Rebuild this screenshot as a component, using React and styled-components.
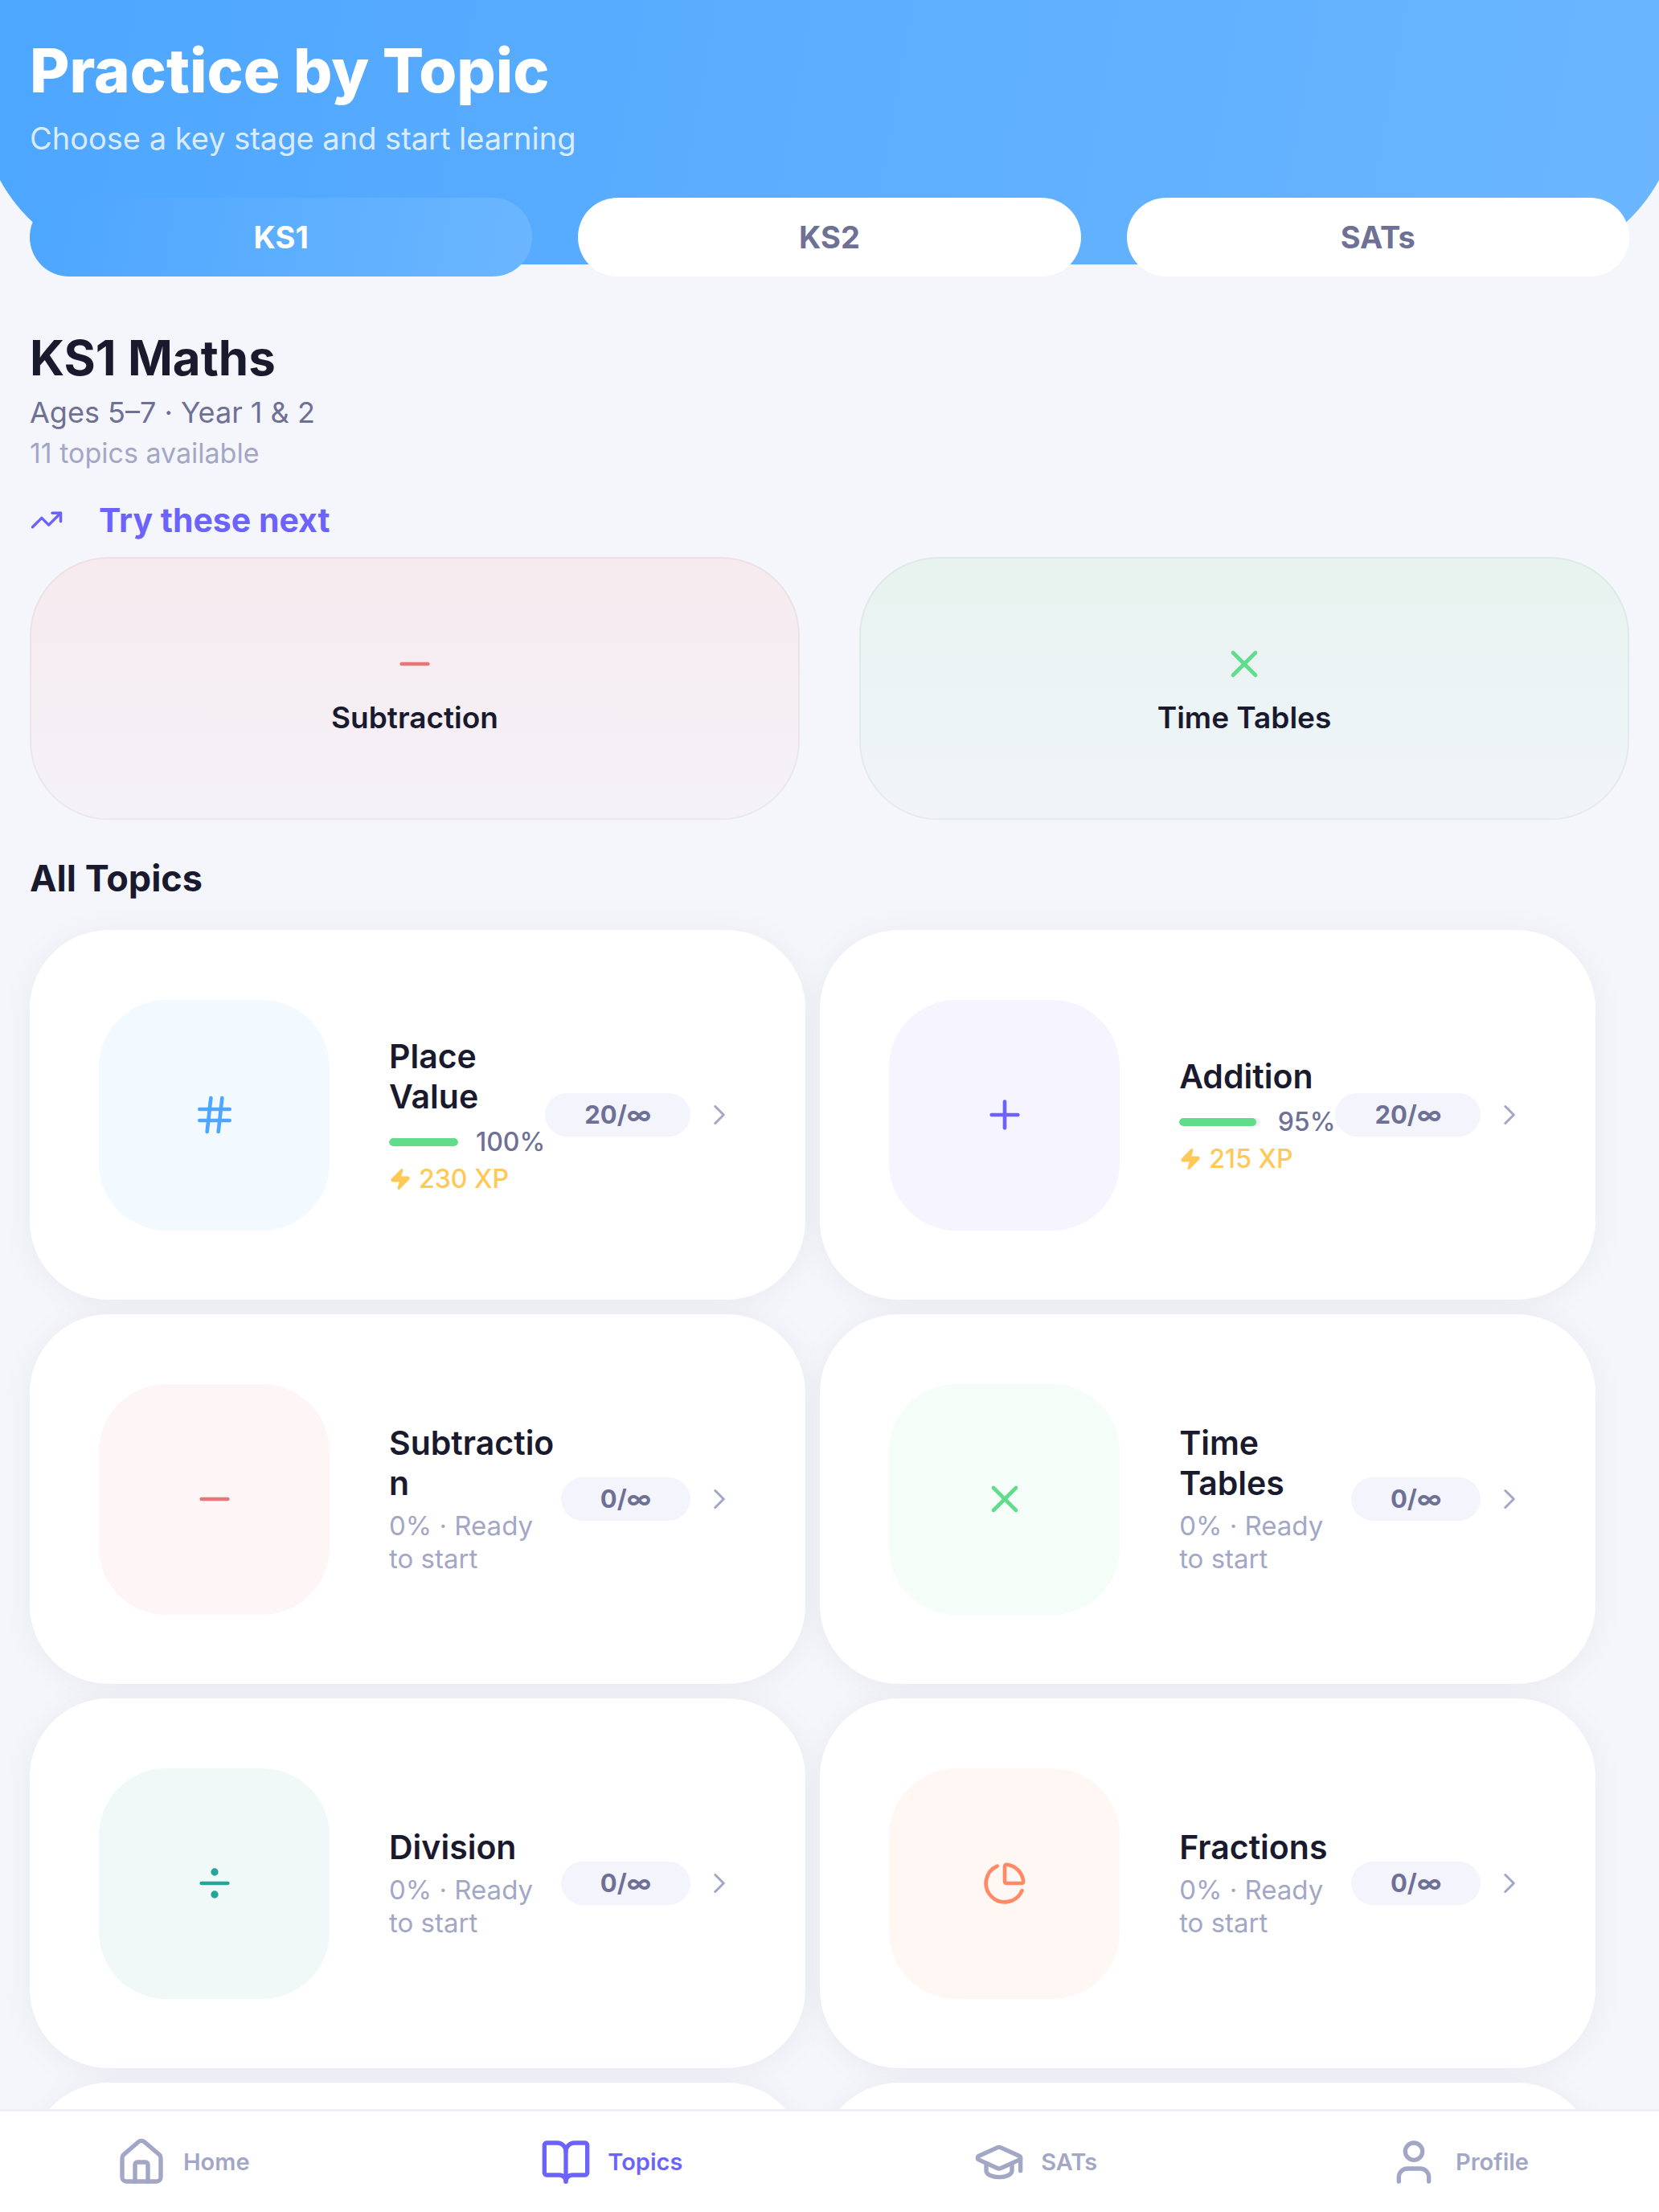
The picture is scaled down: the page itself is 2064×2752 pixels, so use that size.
import React, { useState } from "react";
import styled, { createGlobalStyle } from "styled-components";
import {
  BookOpen,
  ChartPie,
  ChevronRight,
  Divide,
  GraduationCap,
  Hash,
  House,
  Minus,
  Plus,
  TrendingUp,
  User,
  X,
  Zap,
} from "lucide-react";

const GlobalStyle = createGlobalStyle`
  * {
    box-sizing: border-box;
  }
  body {
    margin: 0;
    background-color: #f5f6fc;
    color: #1a1a2e;
    font-family: Inter, "Liberation Sans", sans-serif;
  }
  h1, h2, h3, p {
    margin: 0;
  }
`;

const Screen = styled.div`
  display: flex;
  flex-direction: column;
  height: 100vh;
  overflow: hidden;
`;

const Content = styled.main`
  flex: 1;
  min-height: 0;
  overflow-x: hidden;
  overflow-y: auto;
  scrollbar-width: none;
`;

const Header = styled.header`
  margin: 0 -24px;
  padding: 41px 61px 133px;
  border-radius: 0 0 200px 200px;
  background: linear-gradient(100deg, #4da6ff, #6bb6ff);
  color: white;
`;

const Title = styled.h1`
  font-size: 76px;
  line-height: 92px;
  font-weight: 800;
`;

const Subtitle = styled.p`
  margin-top: 15px;
  font-size: 38px;
  line-height: 48px;
  color: rgba(255, 255, 255, 0.8);
`;

const StageTabs = styled.div`
  display: grid;
  grid-template-columns: repeat(3, 1fr);
  gap: 57px;
  margin-top: -83px;
  padding: 0 37px;
`;

const StageTab = styled.button`
  height: 98px;
  border: none;
  border-radius: 49px;
  background: ${(props) =>
    props.$active ? "linear-gradient(100deg, #4da6ff, #6bb6ff)" : "white"};
  color: ${(props) => (props.$active ? "white" : "#6e7096")};
  font-family: inherit;
  font-size: 38px;
  font-weight: 700;
`;

const Section = styled.section`
  padding: 64px 37px 0;
`;

const StageName = styled.h2`
  font-size: 60px;
  line-height: 74px;
  font-weight: 700;
`;

const StageAges = styled.p`
  margin-top: 9px;
  font-size: 36px;
  line-height: 44px;
  color: #6e7096;
`;

const StageCount = styled.p`
  margin-top: 8px;
  font-size: 34px;
  line-height: 42px;
  color: #a3a7c6;
`;

const NextHeading = styled.h3`
  display: flex;
  align-items: center;
  gap: 44px;
  margin-top: 37px;
  font-size: 41px;
  line-height: 50px;
  font-weight: 700;
  color: #6c63ff;
`;

const NextList = styled.div`
  display: grid;
  grid-template-columns: repeat(2, 1fr);
  gap: 74px;
  margin-top: 21px;
`;

const NextCard = styled.button`
  display: flex;
  flex-direction: column;
  align-items: center;
  justify-content: center;
  gap: 16px;
  height: 327px;
  border: 2px solid rgba(0, 0, 0, 0.04);
  border-radius: 98px;
  background: linear-gradient(${(props) => props.$from}, ${(props) => props.$to}) border-box;
  color: ${(props) => props.$color};
`;

const NextName = styled.span`
  font-family: Inter, "Liberation Sans", sans-serif;
  font-size: 37px;
  line-height: 46px;
  font-weight: 600;
  color: #1a1a2e;
`;

const AllHeading = styled.h3`
  margin: 45px 0 36px;
  font-size: 45px;
  line-height: 56px;
  font-weight: 700;
`;

const TopicGrid = styled.div`
  display: flex;
  flex-wrap: wrap;
  gap: 18px;
`;

const TopicCard = styled.a`
  display: flex;
  align-items: center;
  width: 48.5%;
  min-height: 460px;
  padding: 86px;
  border-radius: 98px;
  background-color: white;
  box-shadow: 0 4px 42px rgba(26, 26, 46, 0.05);
  color: inherit;
  text-decoration: none;
`;

const IconTile = styled.div`
  display: flex;
  flex: none;
  align-items: center;
  justify-content: center;
  width: 287px;
  height: 287px;
  margin-right: 74px;
  border-radius: 84px;
  background-color: ${(props) => props.$tint};
  color: ${(props) => props.$color};
`;

const TopicInfo = styled.div`
  flex: 1;
  min-width: 0;
`;

const TopicName = styled.h3`
  font-size: 41px;
  line-height: 50px;
  font-weight: 600;
  overflow-wrap: anywhere;
`;

const TopicStatus = styled.p`
  margin-top: 8px;
  font-size: 33px;
  line-height: 41px;
  color: #a3a7c6;
`;

const ProgressRow = styled.div`
  display: flex;
  align-items: center;
  gap: 22px;
  margin-top: 13px;
  font-size: 32px;
  line-height: 38px;
  font-weight: 500;
  color: #6e7096;
`;

const ProgressTrack = styled.div`
  flex: 1;
  height: 10px;
  border-radius: 5px;
  background-color: #eeeff6;
  overflow: hidden;
`;

const ProgressFill = styled.div`
  height: 100%;
  border-radius: 5px;
  background-color: #5fdd8b;
`;

const XpRow = styled.div`
  display: flex;
  align-items: center;
  gap: 9px;
  margin-top: 8px;
  font-size: 32px;
  line-height: 38px;
  font-weight: 500;
  color: #ffc857;
`;

const CountPill = styled.span`
  flex: none;
  margin-right: 15px;
  padding: 0 49px;
  border-radius: 27px;
  background-color: #f4f5fc;
  font-size: 31px;
  line-height: 54px;
  font-weight: 700;
  color: #6e7096;
`;

const BottomNav = styled.nav`
  display: flex;
  flex: none;
  justify-content: space-between;
  height: 128px;
  padding: 0 162px 0 144px;
  border-top: 3px solid #f0f0f7;
  background-color: white;
`;

const NavLink = styled.a`
  display: flex;
  align-items: center;
  gap: 20px;
  font-size: 29px;
  font-weight: 600;
  color: ${(props) => (props.$active ? "#6c63ff" : "#a3a7c6")};
  text-decoration: none;
`;

const stages = ["KS1", "KS2", "SATs"];

const topics = [
  { name: "Place Value", icon: Hash, color: "#4da6ff", tint: "#f2f9ff", done: 20, percent: 100, xp: 230 },
  { name: "Addition", icon: Plus, color: "#6c63ff", tint: "#f5f4ff", done: 20, percent: 95, xp: 215 },
  { name: "Subtraction", icon: Minus, color: "#e87678", tint: "#fdf5f6", done: 0 },
  { name: "Time Tables", icon: X, color: "#5fdd8b", tint: "#f4fdf8", done: 0 },
  { name: "Division", icon: Divide, color: "#26a69a", tint: "#f0f9f8", done: 0 },
  { name: "Fractions", icon: ChartPie, color: "#ff8a65", tint: "#fff7f4", done: 0 },
];

const navItems = [
  { name: "Home", icon: House },
  { name: "Topics", icon: BookOpen },
  { name: "SATs", icon: GraduationCap },
  { name: "Profile", icon: User },
];

function Topic({ topic }) {
  const Icon = topic.icon;
  return (
    <TopicCard href="#topic">
      <IconTile $tint={topic.tint} $color={topic.color}>
        <Icon size={56} />
      </IconTile>
      <TopicInfo>
        <TopicName>{topic.name}</TopicName>
        {topic.percent ? (
          <>
            <ProgressRow>
              <ProgressTrack>
                <ProgressFill style={{ width: `${topic.percent}%` }} />
              </ProgressTrack>
              {topic.percent}%
            </ProgressRow>
            <XpRow>
              <Zap size={28} fill="currentColor" />
              {topic.xp} XP
            </XpRow>
          </>
        ) : (
          <TopicStatus>0% · Ready to start</TopicStatus>
        )}
      </TopicInfo>
      <CountPill>{topic.done}/∞</CountPill>
      <ChevronRight size={42} strokeWidth={1.75} color="#a3a7c6" />
    </TopicCard>
  );
}

export default function App() {
  const [stage, setStage] = useState("KS1");

  return (
    <Screen>
      <GlobalStyle />
      <Content>
        <Header>
          <Title>Practice by Topic</Title>
          <Subtitle>Choose a key stage and start learning</Subtitle>
        </Header>
        <StageTabs>
          {stages.map((name) => (
            <StageTab key={name} $active={name === stage} onClick={() => setStage(name)}>
              {name}
            </StageTab>
          ))}
        </StageTabs>
        <Section>
          <StageName>KS1 Maths</StageName>
          <StageAges>Ages 5–7 · Year 1 &amp; 2</StageAges>
          <StageCount>11 topics available</StageCount>

          <NextHeading>
            <TrendingUp size={42} />
            Try these next
          </NextHeading>
          <NextList>
            <NextCard $from="#f6eaee" $to="#f4f2f8" $color="#e87678">
              <Minus size={56} />
              <NextName>Subtraction</NextName>
            </NextCard>
            <NextCard $from="#e7f3ef" $to="#f0f4f9" $color="#5fdd8b">
              <X size={56} />
              <NextName>Time Tables</NextName>
            </NextCard>
          </NextList>

          <AllHeading>All Topics</AllHeading>
          <TopicGrid>
            {topics.map((topic) => (
              <Topic key={topic.name} topic={topic} />
            ))}
            {/* still loading */}
            <TopicCard as="div" />
            <TopicCard as="div" />
          </TopicGrid>
        </Section>
      </Content>
      <BottomNav>
        {navItems.map(({ name, icon: Icon }) => (
          <NavLink key={name} href="#nav" $active={name === "Topics"}>
            <Icon size={64} />
            {name}
          </NavLink>
        ))}
      </BottomNav>
    </Screen>
  );
}
